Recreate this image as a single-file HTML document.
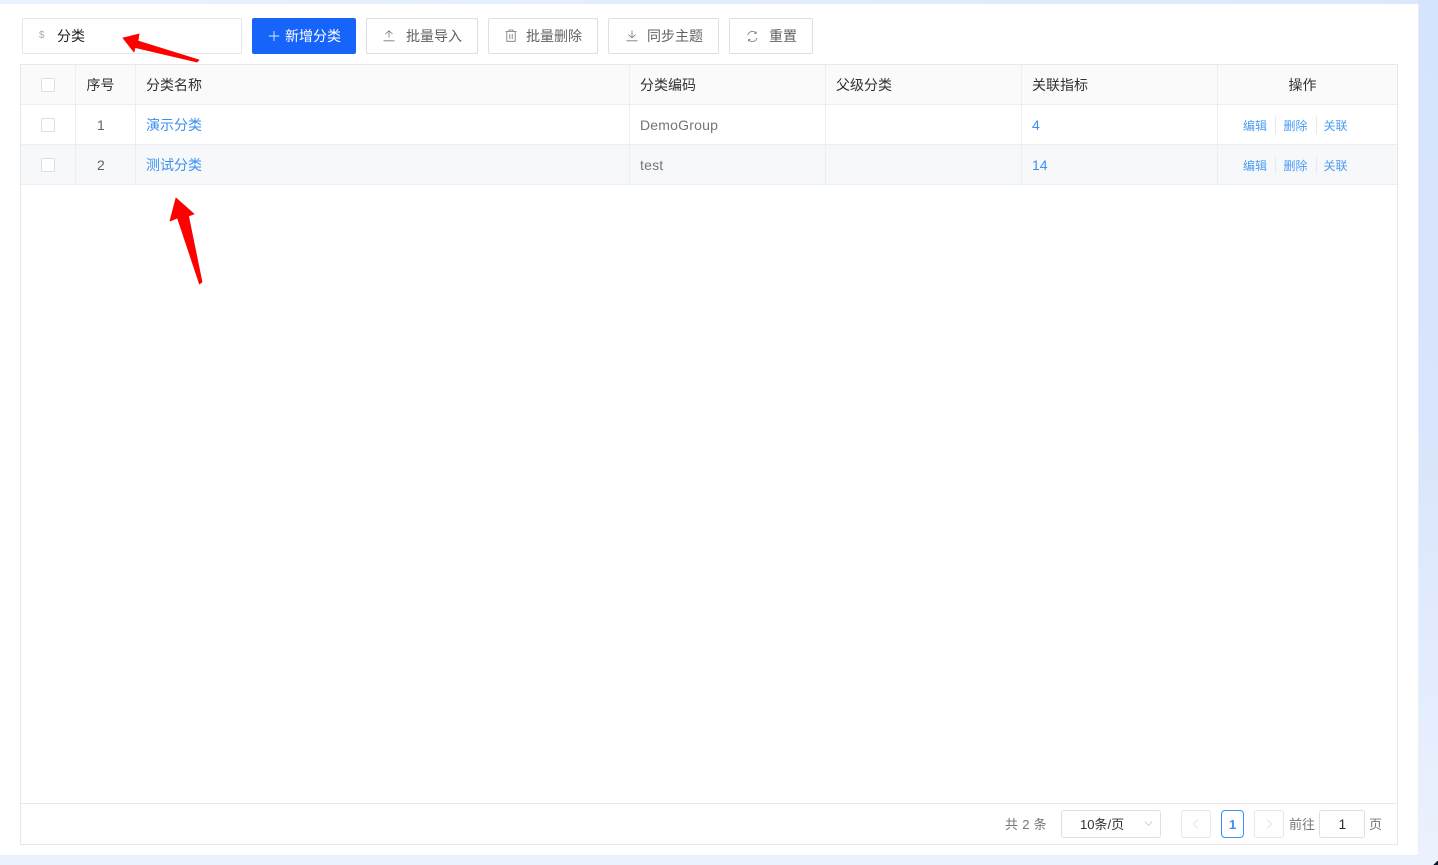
<!DOCTYPE html>
<html lang="zh"><head><meta charset="utf-8"><title>分类</title>
<style>
*{box-sizing:border-box}
html,body{margin:0;padding:0;width:1438px;height:865px;overflow:hidden}
body{position:relative;background:#ebf2fd;font-family:"Liberation Sans","Noto Sans CJK SC",sans-serif;font-size:14px;color:#606266}
div,span,svg{position:absolute}
#bgt{left:0;top:0;width:1438px;height:4px;background:linear-gradient(90deg,#e9f3fd,#dbe7fc)}
#bgr{left:1418px;top:0;width:20px;height:856px;background:linear-gradient(180deg,#d5e3fc,#d9e5fc 50%,#ebf2fd)}
#card{left:0;top:4px;width:1419px;height:852px;background:#fff;border-right:1px solid #e8eefa;border-bottom:1px solid #e8eefa}
.t{white-space:nowrap;line-height:20px}
.btn{top:18px;height:36px;background:#fff;border:1px solid #dcdfe6;border-radius:2px}
#tbl{left:20px;top:64px;width:1378px;height:781px;border:1px solid #e6e8ee;background:#fff}
.hd{left:21px;top:65px;width:1376px;height:40px;background:#fafafa}
.r2{left:21px;top:145px;width:1376px;height:40px;background:#f7f8fa}
.hl{left:21px;width:1376px;height:1px;background:#ebeef5}
.vl{top:65px;width:1px;height:120px;background:#ebeef5}
.cb{left:41px;width:14px;height:14px;background:#fff;border:1px solid #dcdfe6;border-radius:2px}
.h{color:#303133;top:75px}
.b{color:#3a8ff5}
.op{font-size:12px;color:#4a9cf6}
.sep{width:1px;height:18px;background:#e8eaf0}
.pg{top:810px;height:28px;background:#fff;border:1px solid #dcdfe6;border-radius:3px}
</style></head><body>
<div id="bgt"></div><div id="bgr"></div><div id="card"></div>
<div style="left:1432px;top:861px;width:6px;height:4px;background:linear-gradient(135deg,transparent 50%,#0b1a33 55%)"></div>

<div style="left:22px;top:18px;width:220px;height:36px;background:#fff;border:1px solid #e4e7ed;border-radius:2px"></div>
<div class="t" style="left:39px;top:26px;font-size:10px;color:#a8abb2">$</div>
<div class="t" style="left:57px;top:26px;color:#222">分类</div>

<div class="btn" style="left:252px;width:104px;background:#1764fb;border-color:#1764fb"></div>
<svg style="left:268px;top:30px" width="12" height="12" viewBox="0 0 12 12"><path d="M6 1v10M.8 6h10.400" stroke="#dfe9ff" fill="none" stroke-width=".9"/></svg>
<div class="t" style="left:285px;top:26px;color:#fff">新增分类</div>

<div class="btn" style="left:366px;width:112px"></div>
<svg style="left:383px;top:30px" width="12" height="12" viewBox="0 0 12 12"><path d="M2.500 4 6 .8 9.500 4M6 .8V7.500M.5 10.800h11" stroke="#73767a" fill="none" stroke-width=".8"/></svg>
<div class="t" style="left:406px;top:26px">批量导入</div>

<div class="btn" style="left:488px;width:110px"></div>
<svg style="left:505px;top:29px" width="12" height="13" viewBox="0 0 12 13"><path d="M.5 2.500h11M4 2.500V1h4v1.500M1.800 2.500v9.800h8.400V2.500M4.800 5v5M7.200 5v5" stroke="#73767a" fill="none" stroke-width=".8"/></svg>
<div class="t" style="left:526px;top:26px">批量删除</div>

<div class="btn" style="left:608px;width:111px"></div>
<svg style="left:626px;top:30px" width="12" height="12" viewBox="0 0 12 12"><path d="M2.500 4.500 6 7.800 9.500 4.500M6 7.800V.5M.5 10.800h11" stroke="#73767a" fill="none" stroke-width=".8"/></svg>
<div class="t" style="left:647px;top:26px">同步主题</div>

<div class="btn" style="left:729px;width:84px"></div>
<svg style="left:747px;top:31px" width="11" height="11" viewBox="0 0 11 11"><path d="M.8 4.200A4.600 4.600 0 0 1 8.800 2M10 6.800A4.600 4.600 0 0 1 2 9M9.200 .5V2.500H7.200M1.600 10.500V8.500H3.600" stroke="#73767a" fill="none" stroke-width=".8"/></svg>
<div class="t" style="left:769px;top:26px">重置</div>

<div id="tbl"></div>
<div class="hd"></div><div class="r2"></div>
<div class="hl" style="top:104px"></div><div class="hl" style="top:144px"></div><div class="hl" style="top:184px"></div>
<div class="hl" style="top:803px;background:#e6e8ee"></div>
<div class="vl" style="left:75px"></div><div class="vl" style="left:135px"></div><div class="vl" style="left:629px"></div><div class="vl" style="left:825px"></div><div class="vl" style="left:1021px"></div><div class="vl" style="left:1217px"></div>

<div class="cb" style="top:78px"></div><div class="cb" style="top:118px"></div><div class="cb" style="top:158px"></div>

<div class="t h" style="left:86.500px">序号</div>
<div class="t h" style="left:146px">分类名称</div>
<div class="t h" style="left:640px">分类编码</div>
<div class="t h" style="left:836px">父级分类</div>
<div class="t h" style="left:1032px">关联指标</div>
<div class="t h" style="left:1288.500px">操作</div>

<div class="t" style="left:97px;top:115px">1</div>
<div class="t b" style="left:146px;top:115px">演示分类</div>
<div class="t" style="left:640px;top:115px;letter-spacing:.2px;color:#73767a">DemoGroup</div>
<div class="t b" style="left:1032px;top:115px">4</div>
<div class="t op" style="left:1243px;top:116px">编辑</div><div class="sep" style="left:1275px;top:116px"></div>
<div class="t op" style="left:1283.500px;top:116px">删除</div><div class="sep" style="left:1316px;top:116px"></div>
<div class="t op" style="left:1323.500px;top:116px">关联</div>

<div class="t" style="left:97px;top:155px">2</div>
<div class="t b" style="left:146px;top:155px">测试分类</div>
<div class="t" style="left:640px;top:155px;letter-spacing:.2px;color:#73767a">test</div>
<div class="t b" style="left:1032px;top:155px">14</div>
<div class="t op" style="left:1243px;top:156px">编辑</div><div class="sep" style="left:1275px;top:156px"></div>
<div class="t op" style="left:1283.500px;top:156px">删除</div><div class="sep" style="left:1316px;top:156px"></div>
<div class="t op" style="left:1323.500px;top:156px">关联</div>

<div class="t" style="left:1005px;top:815px;font-size:13px;color:#73767a;letter-spacing:.3px">共 2 条</div>
<div class="pg" style="left:1061px;width:100px"></div>
<div class="t" style="left:1080px;top:815px;font-size:13px;color:#303133">10条/页</div>
<svg style="left:1144px;top:820px" width="9" height="7" viewBox="0 0 9 7"><path d="M1 1.500 4.500 5.500 8 1.500" stroke="#c8ccd4" stroke-width=".9" fill="none"/></svg>
<div class="pg" style="left:1181px;width:30px;border-color:#e6e8f0"></div>
<svg style="left:1191px;top:818px" width="9" height="12" viewBox="0 0 9 12"><path d="M7 1.500 2.500 6 7 10.500" stroke="#e2e5ec" fill="none"/></svg>
<div class="pg" style="left:1221px;width:23px;border-color:#3b8ff5;border-radius:4px"></div>
<div class="t" style="left:1229px;top:815px;font-size:13px;font-weight:bold;color:#3b8ff5">1</div>
<div class="pg" style="left:1254px;width:30px;border-color:#e6e8f0"></div>
<svg style="left:1265px;top:818px" width="9" height="12" viewBox="0 0 9 12"><path d="M2 1.500 6.500 6 2 10.500" stroke="#e2e5ec" fill="none"/></svg>
<div class="t" style="left:1289px;top:815px;font-size:13px;color:#73767a">前往</div>
<div class="pg" style="left:1319px;width:46px"></div>
<div class="t" style="left:1338.500px;top:814px;font-size:14px;color:#303133">1</div>
<div class="t" style="left:1369px;top:815px;font-size:13px;color:#73767a">页</div>

<svg style="left:0;top:0" width="1438" height="865" viewBox="0 0 1438 865">
<path d="M123 38 139 34 138 41 199 60 197 62 135 47.500 134 52Z" fill="#fe0000" stroke="#fe0000" stroke-width=".8" stroke-linejoin="round"/>
<path d="M176 198 194 214 188.500 216 202 282 199.500 284 177.500 218 170 221Z" fill="#fe0000" stroke="#fe0000" stroke-width=".8" stroke-linejoin="round"/>
</svg>
</body></html>
